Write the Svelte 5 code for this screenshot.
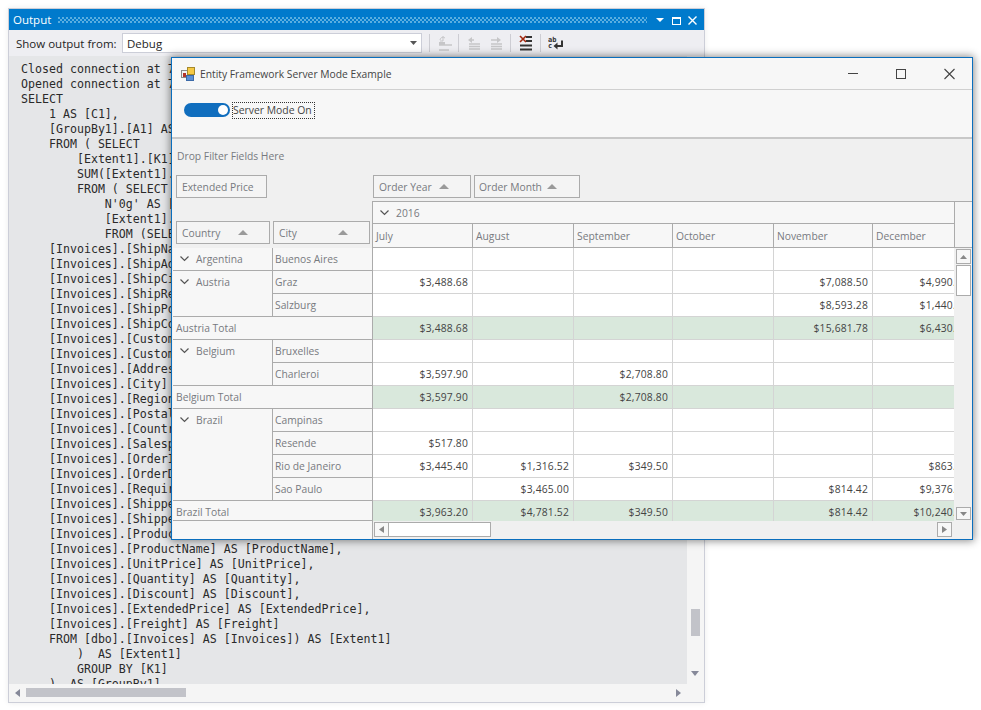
<script>
  const code = [
    "Closed connection at 7/11/2018 3:24:51 PM +03:00", "Opened connection at 7/11/2018 3:24:51 PM +03:00", "SELECT",
    "    1 AS [C1],", "    [GroupBy1].[A1] AS [C2],", "    FROM ( SELECT",
    "        [Extent1].[K1] AS [K1],", "        SUM([Extent1].[A1]) AS [A1]", "        FROM ( SELECT",
    "            N'0g' AS [K1],", "            [Extent1].[ExtendedPrice] AS [A1]", "            FROM (SELECT",
    "    [Invoices].[ShipName] AS [ShipName],", "    [Invoices].[ShipAddress] AS [ShipAddress],", "    [Invoices].[ShipCity] AS [ShipCity],",
    "    [Invoices].[ShipRegion] AS [ShipRegion],", "    [Invoices].[ShipPostalCode] AS [ShipPostalCode],", "    [Invoices].[ShipCountry] AS [ShipCountry],",
    "    [Invoices].[CustomerID] AS [CustomerID],", "    [Invoices].[CustomerName] AS [CustomerName],", "    [Invoices].[Address] AS [Address],",
    "    [Invoices].[City] AS [City],", "    [Invoices].[Region] AS [Region],", "    [Invoices].[PostalCode] AS [PostalCode],",
    "    [Invoices].[Country] AS [Country],", "    [Invoices].[Salesperson] AS [Salesperson],", "    [Invoices].[OrderID] AS [OrderID],",
    "    [Invoices].[OrderDate] AS [OrderDate],", "    [Invoices].[RequiredDate] AS [RequiredDate],", "    [Invoices].[ShippedDate] AS [ShippedDate],",
    "    [Invoices].[ShipperName] AS [ShipperName],", "    [Invoices].[ProductID] AS [ProductID],", "    [Invoices].[ProductName] AS [ProductName],",
    "    [Invoices].[UnitPrice] AS [UnitPrice],", "    [Invoices].[Quantity] AS [Quantity],", "    [Invoices].[Discount] AS [Discount],",
    "    [Invoices].[ExtendedPrice] AS [ExtendedPrice],", "    [Invoices].[Freight] AS [Freight]", "    FROM [dbo].[Invoices] AS [Invoices]) AS [Extent1]",
    "        )  AS [Extent1]", "        GROUP BY [K1]", "    )  AS [GroupBy1]"
  ].join("\n");

  const months = ["July", "August", "September", "October", "November", "December"];

  const rows = [
    { vals: ["", "", "", "", "", ""] },
    { vals: ["$3,488.68", "", "", "", "$7,088.50", "$4,990.36"] },
    { vals: ["", "", "", "", "$8,593.28", "$1,440.00"] },
    { total: true, vals: ["$3,488.68", "", "", "", "$15,681.78", "$6,430.36"] },
    { vals: ["", "", "", "", "", ""] },
    { vals: ["$3,597.90", "", "$2,708.80", "", "", ""] },
    { total: true, vals: ["$3,597.90", "", "$2,708.80", "", "", ""] },
    { vals: ["", "", "", "", "", ""] },
    { vals: ["$517.80", "", "", "", "", ""] },
    { vals: ["$3,445.40", "$1,316.52", "$349.50", "", "", "$863.50"] },
    { vals: ["", "$3,465.00", "", "", "$814.42", "$9,376.50"] },
    { total: true, vals: ["$3,963.20", "$4,781.52", "$349.50", "", "$814.42", "$10,240.00"] }
  ];

  const groups = [
    { country: "Argentina", cities: ["Buenos Aires"] },
    { country: "Austria", cities: ["Graz", "Salzburg"], total: "Austria Total" },
    { country: "Belgium", cities: ["Bruxelles", "Charleroi"], total: "Belgium Total" },
    { country: "Brazil", cities: ["Campinas", "Resende", "Rio de Janeiro", "Sao Paulo"], total: "Brazil Total" }
  ];
</script>

<div class="output">
  <div class="o-title">
    <span class="o-name">Output</span>
    <span class="grip"></span>
    <svg class="o-btns" width="44" height="14" viewBox="0 0 44 14">
      <path d="M3 5h8l-4 4z" fill="#fff"/>
      <rect x="19.500" y="4.500" width="8" height="7" fill="none" stroke="#fff"/><rect x="19" y="4" width="9" height="2" fill="#fff"/>
      <path d="M35.500 3.500l8 8M43.500 3.500l-8 8" stroke="#fff" stroke-width="1.400" fill="none"/>
    </svg>
  </div>
  <div class="o-tools">
    <span class="o-label">Show output from:</span>
    <div class="combo"><span>Debug</span>
      <svg width="7" height="4" viewBox="0 0 7 4"><path d="M0 0h7L3.500 4z" fill="#555"/></svg>
    </div>
    <span class="sep s1"></span>
    <svg class="tool" width="16" height="16" viewBox="0 0 16 16" fill="none" stroke="#c6c6c8"><path d="M3 5a3 3 0 0 1 5-2M6 1v5H3" /><path d="M2 10h13M2 15h10" stroke-width="1.400"/><rect x="2" y="7" width="6" height="3" fill="#c6c6c8" stroke="none"/></svg>
    <span class="sep s2"></span>
    <svg class="tool t2" width="14" height="14" viewBox="0 0 14 14" fill="none" stroke="#c6c6c8" stroke-width="1.300"><path d="M5 1L1 4l4 3z" fill="#c6c6c8" stroke="none"/><path d="M4 4h3M2 8h11M2 10.500h11M2 13h11"/></svg>
    <svg class="tool t3" width="14" height="14" viewBox="0 0 14 14" fill="none" stroke="#c6c6c8" stroke-width="1.300"><path d="M8 1l4 3-4 3z" fill="#c6c6c8" stroke="none"/><path d="M2 4h7M2 8h11M2 10.500h11M2 13h11"/></svg>
    <span class="sep s3"></span>
    <svg class="tool t4" width="16" height="16" viewBox="0 0 16 16" fill="none"><path d="M7 2h6M7 6h6M1 10.500h12M1 14.500h12" stroke="#333" stroke-width="1.800"/><path d="M1 1l6 6M7 1L1 7" stroke="#a1260d" stroke-width="1.600"/></svg>
    <span class="sep s4"></span>
    <svg class="tool t5" width="16" height="14" viewBox="0 0 16 14" fill="none">
      <text x="0" y="5.500" class="ab">ab</text><text x="0" y="12" class="ab">c</text>
      <path d="M14 4.500v5.500H7" stroke="#333" stroke-width="2"/><path d="M9.500 6.500L5.500 10l4 3.500z" fill="#333"/>
    </svg>
  </div>
  <div class="o-main">
    <div class="o-code"><pre>{code}</pre></div>
    <div class="o-vs"><span class="o-vthumb"></span>
      <svg class="o-down" width="8" height="5" viewBox="0 0 8 5"><path d="M0 0h8L4 5z" fill="#868999"/></svg>
    </div>
  </div>
  <div class="o-hs">
    <svg width="5" height="8" viewBox="0 0 5 8"><path d="M5 0v8L0 4z" fill="#868999"/></svg>
    <span class="o-hthumb"></span>
    <svg class="o-right" width="5" height="8" viewBox="0 0 5 8"><path d="M0 0v8l5-4z" fill="#868999"/></svg>
  </div>
</div>

<div class="dialog">
  <div class="d-title">
    <svg class="d-icon" width="14" height="14" viewBox="0 0 14 14">
      <rect x="0.500" y="3.500" width="6" height="7" fill="#f3f3f3" stroke="#8a8a8a"/>
      <rect x="2" y="6" width="3" height="4" fill="#b5352a"/>
      <rect x="6.500" y="0.500" width="7" height="7" fill="#f6c945" stroke="#a68a2c"/>
      <rect x="5.500" y="8.500" width="7" height="5" fill="#5a8fd6" stroke="#3c6aa8"/>
    </svg>
    <span class="d-name">Entity Framework Server Mode Example</span>
    <svg class="d-btns" width="107" height="12" viewBox="0 0 107 12" fill="none" stroke="#444">
      <path d="M0 5.500h10"/>
      <rect x="48.500" y="1.500" width="9" height="9"/>
      <path d="M96.500 1l10 10M106.500 1l-10 10" stroke-width="1.100"/>
    </svg>
  </div>
  <div class="d-panel">
    <span class="toggle"><span class="knob"></span></span>
    <span class="t-label">Server Mode On</span>
  </div>
  <div class="pivot">
    <div class="filter">Drop Filter Fields Here</div>
    <div class="p-head">
      <div class="p-head-left">
        <div class="chip c-price">Extended Price</div>
        <div class="chip-row">
          <div class="chip c-country">Country<svg class="tri" width="10" height="5" viewBox="0 0 10 5"><path d="M0 5L5 0l5 5z"/></svg></div>
          <div class="chip c-city">City<svg class="tri" width="10" height="5" viewBox="0 0 10 5"><path d="M0 5L5 0l5 5z"/></svg></div>
        </div>
      </div>
      <div class="p-head-right">
        <div class="chip-row top">
          <div class="chip c-year">Order Year<svg class="tri" width="10" height="5" viewBox="0 0 10 5"><path d="M0 5L5 0l5 5z"/></svg></div>
          <div class="chip c-month">Order Month<svg class="tri" width="10" height="5" viewBox="0 0 10 5"><path d="M0 5L5 0l5 5z"/></svg></div>
        </div>
        <div class="col-head">
          <div class="col-main">
            <div class="year"><svg class="chev" width="9" height="6" viewBox="0 0 9 6"><path d="M0.500 0.500l4 4 4-4" fill="none" stroke="#555" stroke-width="1.200"/></svg>2016</div>
            <div class="month-row">
              {#each months as m}<div class="month">{m}</div>{/each}
            </div>
          </div>
          <div class="col-end"></div>
        </div>
      </div>
    </div>
    <div class="p-body">
      <div class="row-fields">
        {#each groups as g}
          <div class="grp">
            <div class="country"><svg class="chev" width="9" height="6" viewBox="0 0 9 6"><path d="M0.500 0.500l4 4 4-4" fill="none" stroke="#555" stroke-width="1.200"/></svg>{g.country}</div>
            <div class="cities">{#each g.cities as c}<div class="city">{c}</div>{/each}</div>
          </div>
          {#if g.total}<div class="total">{g.total}</div>{/if}
        {/each}
        <div class="corner"></div>
      </div>
      <div class="data-wrap">
        <div class="data">
          {#each rows as r}
            <div class="d-row" class:green={r.total}>
              {#each r.vals as v}<div class="cell">{v}</div>{/each}
            </div>
          {/each}
        </div>
        <div class="hs">
          <span class="sb-btn"><svg width="5" height="7" viewBox="0 0 5 7"><path d="M5 0v7L0 3.500z" fill="#888"/></svg></span>
          <span class="hs-thumb"></span>
          <span class="sb-btn hs-end"><svg width="5" height="7" viewBox="0 0 5 7"><path d="M0 0v7l5-3.500z" fill="#888"/></svg></span>
        </div>
      </div>
      <div class="vs">
        <span class="sb-btn"><svg width="7" height="4" viewBox="0 0 7 4"><path d="M0 4h7L3.500 0z" fill="#888"/></svg></span>
        <span class="vs-thumb"></span>
        <span class="sb-btn vs-end"><svg width="7" height="4" viewBox="0 0 7 4"><path d="M0 0h7L3.500 4z" fill="#888"/></svg></span>
      </div>
    </div>
  </div>
</div>

<style>
  :global(body) { margin: 0; background: #fff; overflow: hidden; }
  * { box-sizing: border-box; }

  .output {
    position: absolute; left: 8px; top: 8px; width: 697px; height: 695px;
    border: 1px solid #ccced8; background: #eeeef2;
    box-shadow: 0 0 6px rgba(0,0,0,.08);
    display: flex; flex-direction: column; overflow: hidden;
    font-family: "Open Sans", sans-serif;
  }
  .o-title { height: 21px; background: #007acc; color: #fff; display: flex; align-items: center; padding-left: 4px; flex: none; }
  .o-name { font-size: 11.500px; }
  .grip {
    flex: 1; height: 6px; margin: 0 6px 0 7px;
    background-image: radial-gradient(circle at 1px 1px, #5aaee0 .8px, transparent .9px), radial-gradient(circle at 3px 3px, #5aaee0 .8px, transparent .9px);
    background-size: 4px 4px;
  }
  .o-btns { margin-right: 7px; flex: none; }
  .o-tools { height: 26px; flex: none; position: relative; display: flex; align-items: center; padding-left: 7px; font-size: 11.500px; color: #1e1e1e; }
  .o-label { width: 106px; }
  .combo { width: 300px; height: 20px; background: #fff; border: 1px solid #ccced8; display: flex; align-items: center; justify-content: space-between; padding: 0 4px 0 4px; }
  .sep { position: absolute; top: 4px; width: 1px; height: 18px; background: #cdcdd3; }
  .s1 { left: 420px; } .s2 { left: 449px; } .s3 { left: 501px; } .s4 { left: 531px; }
  .tool { position: absolute; left: 428px; top: 5px; }
  .t2 { left: 458px; top: 6px; } .t3 { left: 480px; top: 6px; } .t4 { left: 510px; top: 5px; } .t5 { left: 539px; top: 6px; }
  .ab { font-family: "DejaVu Sans Mono", monospace; font-size: 7px; font-weight: 700; fill: #333; }
  .o-main { flex: 1; min-height: 0; display: flex; }
  .o-code { flex: 1; background: #e5e6e8; overflow: hidden; padding: 6px 0 0 12px; }
  pre { margin: 0; font-family: "DejaVu Sans Mono", monospace; font-size: 11.620px; line-height: 15px; color: #2a2a2a; }
  .o-vs { width: 17px; background: #f5f5f5; flex: none; position: relative; }
  .o-vthumb { position: absolute; left: 4px; top: 553px; width: 9px; height: 27px; background: #c2c3c9; }
  .o-down { position: absolute; left: 4px; top: 615px; }
  .o-hs { height: 18px; flex: none; background: #f5f5f5; position: relative; display: flex; align-items: center; padding-left: 6px; }
  .o-hthumb { position: absolute; left: 17px; top: 4px; width: 160px; height: 9px; background: #c2c3c9; }
  .o-right { position: absolute; left: 667px; top: 5px; }

  .dialog {
    position: absolute; left: 171px; top: 57px; width: 802px; height: 483px;
    border: 1px solid #0a6ebd; background: #f7f7f7;
    box-shadow: 0 0 8px 1px rgba(0,0,0,.45);
    display: flex; flex-direction: column;
    font-family: "Open Sans", sans-serif; font-size: 10.300px; color: #777a80;
  }
  .d-title { height: 32px; flex: none; display: flex; align-items: center; border-bottom: 1px solid #d0d0d0; padding-left: 9px; position: relative; color: #444; }
  .d-icon { flex: none; margin-right: 5px; }
  .d-name { font-size: 10.300px; }
  .d-btns { position: absolute; left: 676px; top: 10px; }
  .d-panel { height: 49px; flex: none; display: flex; align-items: center; padding: 0 0 7px 12px; border-bottom: 2px solid #c8c8c8; }
  .toggle { width: 46px; height: 14px; border-radius: 7px; background: #106ebe; position: relative; flex: none; }
  .knob { position: absolute; right: 2px; top: 2px; width: 10px; height: 10px; border-radius: 50%; background: #fff; }
  .t-label { margin-left: 2px; height: 17px; width: 83px; border: 1px dotted #333; color: #444; font-size: 10.400px; line-height: 14px; padding-left: 0; white-space: nowrap; }

  .pivot { flex: 1; min-height: 0; background: #f0f0f0; padding-left: 1px; display: flex; flex-direction: column; }
  .filter { height: 36px; flex: none; padding: 9px 0 0 4px; line-height: 16px; }
  .p-head { display: flex; height: 73px; flex: none; }
  .p-head-left { width: 200px; flex: none; padding-left: 3px; position: relative; }
  .chip { height: 23px; border: 1px solid #ababab; background: #f4f4f4; display: flex; align-items: center; padding-left: 5px; position: relative; white-space: nowrap; }
  .c-price { width: 91px; }
  .chip-row { display: flex; gap: 3px; }
  .p-head-left .chip-row { margin-top: 23px; }
  .c-country { width: 94px; }
  .c-city { width: 97px; }
  .tri { position: absolute; top: 8px; fill: #9a9a9a; }
  .c-country .tri { right: 21px; }
  .c-city .tri { right: 21px; }
  .c-year { width: 98px; }
  .c-month { width: 106px; padding-left: 4px; }
  .c-year .tri { right: 21px; }
  .c-month .tri { right: 22px; }
  .p-head-right { flex: 1; min-width: 0; }
  .chip-row.top { height: 26px; }
  .col-head { display: flex; height: 47px; border-left: 1px solid #ababab; margin-left: -1px; }
  .col-main { width: 582px; flex: none; border-right: 1px solid #ababab; overflow: hidden; background: #f7f7f7; }
  .col-end { flex: 1; border-top: 1px solid #ababab; border-bottom: 1px solid #ababab; background: #f4f4f4; }
  .year { height: 23px; border-top: 1px solid #ababab; border-bottom: 1px solid #ababab; display: flex; align-items: center; padding-left: 7px; }
  .chev { flex: none; margin-right: 7px; }
  .month-row { display: flex; height: 24px; border-bottom: 1px solid #ababab; }
  .month { flex: none; width: 100px; border-right: 1px solid #ababab; padding: 4px 0 0 3px; line-height: 16px; }
  .month:nth-child(1) { width: 100px; }
  .month:nth-child(3), .month:nth-child(5) { width: 99px; }
  .month:nth-child(2), .month:nth-child(4) { width: 101px; }

  .p-body { flex: 1; min-height: 0; display: flex; }
  .row-fields { width: 200px; flex: none; background: #f7f7f7; border-right: 1px solid #ababab; display: flex; flex-direction: column; overflow: hidden; }
  .grp { display: flex; flex: none; }
  .country { width: 100px; flex: none; border-right: 1px solid #ababab; border-bottom: 1px solid #ababab; padding: 3px 0 0 7px; display: flex; align-items: flex-start; line-height: 16px; }
  .country .chev { margin-top: 5px; }
  .cities { flex: 1; }
  .city { height: 23px; border-bottom: 1px solid #ababab; padding: 3px 0 0 2px; line-height: 16px; white-space: nowrap; }
  .total { height: 23px; flex: none; border-bottom: 1px solid #ababab; padding: 3px 0 0 3px; line-height: 16px; }
  .total:nth-last-child(2) { height: 20px; }
  .corner { flex: 1; }
  .data-wrap { width: 581px; flex: none; display: flex; flex-direction: column; min-height: 0; background: #f0f0f0; }
  .data { height: 273px; overflow: hidden; flex: none; background: #fff; }
  .d-row { display: flex; height: 23px; border-bottom: 1px solid #d4d4d4; }
  .d-row.green { background: #d9e8dc; }
  .cell { flex: none; width: 100px; border-right: 1px solid #d4d4d4; text-align: right; padding: 3px 4px 0 0; line-height: 16px; color: #444; letter-spacing: .2px; }
  .cell:nth-child(1) { width: 100px; }
  .cell:nth-child(3), .cell:nth-child(5) { width: 99px; }
  .cell:nth-child(2), .cell:nth-child(4) { width: 101px; }
  .hs { height: 17px; flex: none; display: flex; padding: 1px 0 0 1px; gap: 1px; position: relative; }
  .sb-btn { width: 15px; height: 15px; background: #f7f7f7; border: 1px solid #ababab; display: flex; align-items: center; justify-content: center; flex: none; }
  .hs-thumb { width: 102px; height: 15px; background: #fff; border: 1px solid #ababab; border-left: none; margin-left: -1px; }
  .hs-end { position: absolute; left: 564px; top: 1px; }
  .vs { flex: 1; position: relative; background: #f0f0f0; padding: 1px 0 0 2px; display: flex; flex-direction: column; }
  .vs-thumb { width: 15px; height: 31px; background: #fff; border: 1px solid #ababab; margin-top: 1px; flex: none; }
  .vs-end { position: absolute; left: 2px; top: 259px; height: 13px; }
</style>
